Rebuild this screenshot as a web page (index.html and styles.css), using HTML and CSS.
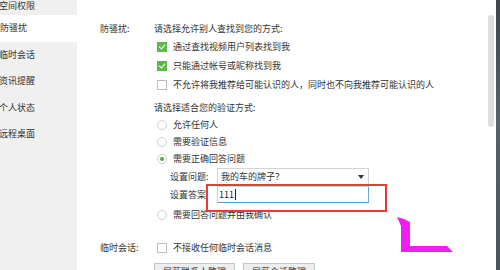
FILE: index.html
```html
<!DOCTYPE html>
<html lang="zh-CN">
<head>
    <meta charset="UTF-8">
    <meta name="viewport" content="width=device-width, initial-scale=1.0">
    <title>防骚扰设置</title>
    <link rel="stylesheet" href="styles.css">
</head>
<body>
    <div class="window">
        <nav class="side">
            <div class="sideItem first">空间权限</div>
            <div class="sideItem active">防骚扰</div>
            <div class="sideItem">临时会话</div>
            <div class="sideItem">资讯提醒</div>
            <div class="sideItem">个人状态</div>
            <div class="sideItem">远程桌面</div>
        </nav>

        <main class="panel">
            <section class="group">
                <div class="groupLabel">防骚扰:</div>
                <div class="groupBody">
                    <div class="caption">请选择允许别人查找到您的方式:</div>
                    <div class="opt check"><span class="box checked"></span>通过查找视频用户列表找到我</div>
                    <div class="opt check"><span class="box checked"></span>只能通过帐号或昵称找到我</div>
                    <div class="opt check"><span class="box"></span>不允许将我推荐给可能认识的人，同时也不向我推荐可能认识的人</div>

                    <div class="caption second">请选择适合您的验证方式:</div>
                    <div class="opt"><span class="radio"></span>允许任何人</div>
                    <div class="opt"><span class="radio"></span>需要验证信息</div>
                    <div class="opt"><span class="radio on"></span>需要正确回答问题</div>

                    <div class="field">
                        <span class="fieldLabel">设置问题:</span>
                        <div class="select">我的车的牌子？<span class="arrow"></span></div>
                    </div>
                    <div class="field">
                        <span class="fieldLabel">设置答案:</span>
                        <div class="input">111<span class="caret"></span></div>
                    </div>

                    <div class="opt last"><span class="radio"></span>需要回答问题并由我确认</div>
                </div>
            </section>

            <section class="group temp">
                <div class="groupLabel">临时会话:</div>
                <div class="groupBody">
                    <div class="opt"><span class="box"></span>不接收任何临时会话消息</div>
                    <div class="buttons">
                        <button class="btn">屏蔽联系人管理</button>
                        <button class="btn">屏蔽会话管理</button>
                    </div>
                </div>
            </section>
        </main>

        <div class="scroll"><div class="thumb"></div></div>
        <div class="edge"></div>

        <!-- annotation on top of the screenshot -->
        <div class="highlight"></div>
        <svg class="mark" width="60" height="40" viewBox="0 0 60 40">
            <polygon points="1,2 8,4 14,7 14,31 51,31 57,37 5,37 5,11" fill="#f01ef0"/>
        </svg>
    </div>
</body>
</html>
```

FILE: styles.css
```css
* {
  box-sizing: border-box;
  margin: 0;
  padding: 0;
}

html, body {
  width: 500px;
  height: 270px;
  overflow: hidden;
  background-color: #FFFFFF;
}

body {
  font-family: "Noto Sans CJK SC", "Noto Sans", sans-serif;
  font-size: 9px;
  color: #333333;
}

.window {
  position: relative;
  width: 500px;
  height: 270px;
  display: flex;
  flex-direction: row;
}

.side {
  width: 77px;
  flex-shrink: 0;
  background-color: #F0F0F0;
}

.sideItem {
  height: 26.5px;
  line-height: 26px;
  margin-left: -1px;
  white-space: nowrap;
}

.sideItem.first {
  height: 15px;
  line-height: 12px;
}

.sideItem.active {
  background-color: #FFFFFF;
  margin-left: 0;
}

.panel {
  flex: 1;
  padding: 20px 0 0 23px;
}

.group {
  display: flex;
  flex-direction: row;
}

.group.temp {
  margin-top: 16px;
}

.groupLabel {
  width: 54px;
  flex-shrink: 0;
  height: 17px;
  line-height: 17px;
}

.groupBody {
  display: flex;
  flex-direction: column;
}

.caption {
  height: 17px;
  line-height: 17px;
  white-space: nowrap;
}

.caption.second {
  margin-top: 5px;
}

.opt {
  display: flex;
  align-items: center;
  height: 17px;
  padding-left: 3px;
  white-space: nowrap;
}

.opt.check {
  height: 19px;
}

.opt.last {
  margin-top: 3px;
}

.box {
  position: relative;
  width: 10px;
  height: 10px;
  border: 1px solid #BDBDBD;
  background-color: #FFFFFF;
  margin-right: 6px;
  flex-shrink: 0;
}

.box.checked {
  background-color: #5CB84A;
  border-color: #5CB84A;
}

.box.checked::after {
  content: "";
  position: absolute;
  left: 2px;
  top: 0px;
  width: 3px;
  height: 5px;
  border-right: 1.5px solid #FFFFFF;
  border-bottom: 1.5px solid #FFFFFF;
  transform: rotate(40deg);
}

.radio {
  position: relative;
  width: 10px;
  height: 10px;
  border: 1px solid #CFCFCF;
  border-radius: 50%;
  margin-right: 6px;
  flex-shrink: 0;
}

.radio.on::after {
  content: "";
  position: absolute;
  left: 2px;
  top: 2px;
  width: 4px;
  height: 4px;
  border-radius: 50%;
  background-color: #4CAF3C;
}

.field {
  display: flex;
  align-items: center;
  height: 17px;
  margin-top: 1px;
  padding-left: 16px;
}

.fieldLabel {
  width: 47px;
  flex-shrink: 0;
}

.select {
  position: relative;
  width: 152px;
  height: 17px;
  line-height: 15px;
  border: 1px solid #D4D4D4;
  padding-left: 3px;
}

.arrow {
  position: absolute;
  right: 4px;
  top: 6px;
  border-left: 3px solid transparent;
  border-right: 3px solid transparent;
  border-top: 4px solid #333333;
}

.input {
  display: flex;
  align-items: center;
  width: 152px;
  height: 17px;
  border: 1px solid #D4D4D4;
  border-right-color: #6FA8DC;
  border-bottom-color: #5B9BD5;
  padding-left: 1px;
  color: #222222;
}

.caret {
  width: 1px;
  height: 11px;
  margin-left: 1px;
  background-color: #222222;
}

.buttons {
  display: flex;
  gap: 8px;
  margin-top: 7px;
}

.btn {
  height: 16px;
  padding: 0 8px;
  font-family: inherit;
  font-size: 9px;
  color: #333333;
  background-color: #EEEEEE;
  border: 1px solid #C4C4C4;
}

.scroll {
  width: 12px;
  flex-shrink: 0;
  padding: 15px 2px 0 4px;
}

.thumb {
  width: 6px;
  height: 112px;
  border-radius: 3px;
  background-color: #DEDEDE;
}

.edge {
  width: 4px;
  flex-shrink: 0;
  background: linear-gradient(to bottom, #3E464B, #56616A 45%, #4A545B);
}

.highlight {
  position: absolute;
  left: 206px;
  top: 184px;
  width: 181px;
  height: 28px;
  border: 2px solid #E53B3B;
}

.mark {
  position: absolute;
  left: 396px;
  top: 215px;
}
```
